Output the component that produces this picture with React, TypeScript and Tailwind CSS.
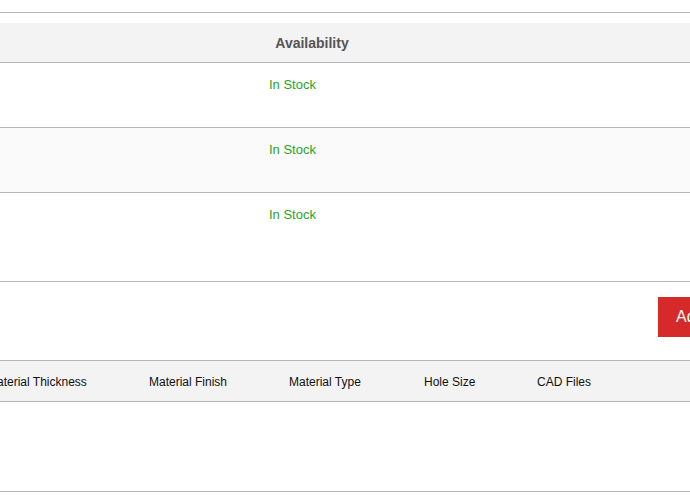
import React from 'react';

const rows = [
  { id: 1, height: 'h-[65px]', bg: 'bg-white' },
  { id: 2, height: 'h-[65px]', bg: 'bg-[#fafafa]' },
  { id: 3, height: 'h-[89px]', bg: 'bg-white' },
];

const specColumns = [
  { label: 'Material Thickness', width: 'w-[162px]' },
  { label: 'Material Finish', width: 'w-[140px]' },
  { label: 'Material Type', width: 'w-[135px]' },
  { label: 'Hole Size', width: 'w-[113px]' },
  { label: 'CAD Files', width: 'w-[140px]' },
];

export default function App() {
  return (
    <div
      className="w-full h-[498px] overflow-hidden bg-white"
      style={{ fontFamily: '"Liberation Sans", Arial, sans-serif' }}
    >
      <div className="w-[900px] pt-[12px]">
        <div className="border-t border-[#b5b5b5] h-[11px]" />

        {/* availability table */}
        <div className="grid grid-cols-[257px_110px_1fr] h-[40px] pt-[2px] bg-[#f3f3f3] border-b border-[#b5b5b5] items-center">
          <div />
          <div className="text-center text-[14px] font-bold text-[#555555]">Availability</div>
          <div />
        </div>
        {rows.map(row => (
          <div
            key={row.id}
            className={`grid grid-cols-[257px_110px_1fr] ${row.height} ${row.bg} border-b border-[#b5b5b5]`}
          >
            <div />
            <div className="pl-3 pt-[12px] text-[13px] leading-[20px] text-[#1fa51f]">In Stock</div>
            <div />
          </div>
        ))}

        <div className="h-[79px] border-b border-[#b5b5b5] pt-[15px] pl-[658px]">
          <button className="h-[40px] px-[18px] bg-[#d62a2a] text-white text-[16px] whitespace-nowrap">
            Add to Cart
          </button>
        </div>

        {/* specifications table */}
        <div className="flex items-center h-[41px] pt-[1px] bg-[#f3f3f3] border-b border-[#b5b5b5] ml-[-13px]">
          {specColumns.map(col => (
            <div key={col.label} className={`${col.width} shrink-0 text-[12px] text-[#111111] whitespace-nowrap`}>
              {col.label}
            </div>
          ))}
        </div>
        <div className="h-[90px] border-b border-[#b5b5b5]" />
      </div>
    </div>
  );
}
